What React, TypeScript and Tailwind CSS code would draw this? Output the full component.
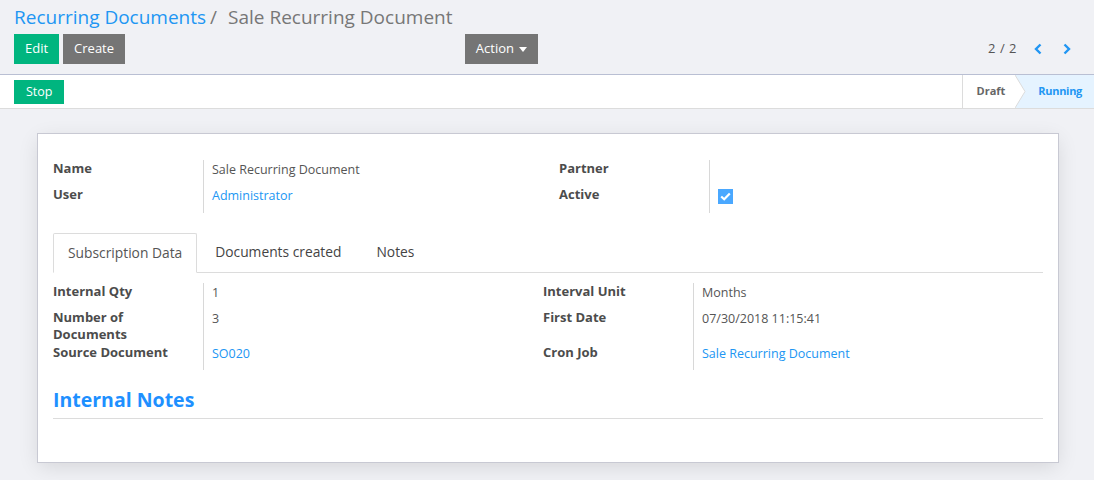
import React from "react";

const font = { fontFamily: '"Open Sans", "Liberation Sans", sans-serif' };

function Label({ children }: { children: React.ReactNode }) {
  return <div className="text-[13px] leading-[17px] font-bold text-[#4c4c4c] pb-[1px]">{children}</div>;
}
function Value({ children, link }: { children?: React.ReactNode; link?: boolean }) {
  return (
    <div className={`border-l border-[#d8d8d8] pl-[8px] pt-[1px] pb-[8px] text-[12.5px] leading-[17px] ${link ? "text-[#2196f3]" : "text-[#555]"}`}>
      {children}
    </div>
  );
}

export default function App() {
  return (
    <div className="min-h-[480px] bg-[#f0f1f5]" style={font}>
      {/* control panel */}
      <div className="px-[14px] pt-[4px] h-[75px] border-b border-[#b9bfd3]">
        <div className="text-[19px] leading-[26px] whitespace-nowrap">
          <span className="text-[#2196f3]">Recurring Documents</span>
          <span className="text-[#777] ml-[4px]">/</span>
          <span className="text-[#777] ml-[11px]">Sale Recurring Document</span>
        </div>
        <div className="flex items-center mt-[4px]">
          <div className="flex w-[524px] items-center">
            <button className="h-[30px] px-[11px] bg-[#00b57f] text-white text-[13px]">Edit</button>
            <button className="h-[30px] px-[11px] bg-[#757575] text-white text-[13px] ml-[4px]">Create</button>
            <button className="h-[30px] px-[11px] bg-[#757575] text-white text-[13px] ml-auto flex items-center gap-[5px]">
              Action
              <svg width="8" height="5" viewBox="0 0 8 5"><path d="M0 0h8L4 5z" fill="white" /></svg>
            </button>
          </div>
          <div className="ml-auto flex items-center text-[13px] text-[#555] mr-[9px]">
            <span className="mr-[17px] tracking-[0.5px]">2 / 2</span>
            <svg width="8" height="12" viewBox="0 0 8 12">
              <path d="M6.5 1.5L2 6L6.5 10.5" stroke="#2196f3" strokeWidth="2.4" fill="none" />
            </svg>
            <svg width="8" height="12" viewBox="0 0 8 12" className="ml-[21px]">
              <path d="M1.5 1.5L6 6L1.5 10.5" stroke="#2196f3" strokeWidth="2.4" fill="none" />
            </svg>
          </div>
        </div>
      </div>
      {/* status bar */}
      <div className="h-[34px] bg-white border-b border-[#dcdcdc] flex items-center pl-[14px]">
        <button className="h-[24px] pt-[1px] px-[12px] bg-[#00b57f] text-white text-[12.5px]">Stop</button>
        <div className="ml-auto flex h-full">
          <div className="h-full border-l border-[#dcdcdc] pl-[14px] pr-[10px] flex items-center text-[11px] font-bold text-[#666]">
            Draft
          </div>
          <div className="relative h-full bg-[#e5f3ff] pl-[23px] pr-[12px] flex items-center text-[11px] font-bold text-[#2196f3] tracking-[-0.3px]">
            <svg className="absolute left-0 top-0" width="12" height="33" viewBox="0 0 12 33">
              <path d="M0 0L10 16.5L0 33Z" fill="white" />
              <path d="M0 0L10 16.5L0 33" stroke="#dcdcdc" strokeWidth="1" fill="none" />
            </svg>
            Running
          </div>
        </div>
      </div>
      {/* sheet */}
      <div className="pt-[24px] pl-[37px] pr-[35px]">
        <div className="bg-white border border-[#c8c9d3] shadow-[0_5px_20px_-2px_rgba(0,0,0,0.12)] h-[330px] px-[15px] pt-[26px]">
          <div className="grid grid-cols-[150px_356px_150px_1fr]">
            <Label>Name</Label>
            <Value>Sale Recurring Document</Value>
            <Label>Partner</Label>
            <Value />
            <Label>User</Label>
            <Value link>Administrator</Value>
            <Label>Active</Label>
            <Value>
              <span className="inline-flex w-[15px] h-[15px] bg-[#4aa8ff] items-center justify-center mt-[2px]">
                <svg width="11" height="9" viewBox="0 0 11 9">
                  <path d="M1.2 4.5L4.2 7.3L9.8 1.5" stroke="white" strokeWidth="2.2" fill="none" />
                </svg>
              </span>
            </Value>
          </div>
          {/* tabs */}
          <div className="mt-[20px] flex border-b border-[#dcdcdc] h-[40px] text-[13.8px]">
            <div className="px-[14px] border border-[#dcdcdc] border-b-white bg-white rounded-t-[2px] mb-[-1px] flex items-center text-[#555]">
              Subscription Data
            </div>
            <div className="pl-[18px] pr-[17px] flex items-center text-[#444]">Documents created</div>
            <div className="pl-[18px] flex items-center text-[#444]">Notes</div>
          </div>
          <div className="pt-[10px] grid grid-cols-[150px_340px_150px_1fr]">
            <Label>Internal Qty</Label>
            <Value>1</Value>
            <Label>Interval Unit</Label>
            <Value>Months</Value>
            <Label>Number of<br />Documents</Label>
            <Value>3</Value>
            <Label>First Date</Label>
            <Value>07/30/2018 11:15:41</Value>
            <Label>Source Document</Label>
            <Value link>SO020</Value>
            <Label>Cron Job</Label>
            <Value link>Sale Recurring Document</Value>
          </div>
          <div className="mt-[18px] text-[19.5px] leading-[24px] font-bold text-[#1e90ff] pb-[6px] border-b border-[#dcdcdc]">
            Internal Notes
          </div>
        </div>
      </div>
    </div>
  );
}
